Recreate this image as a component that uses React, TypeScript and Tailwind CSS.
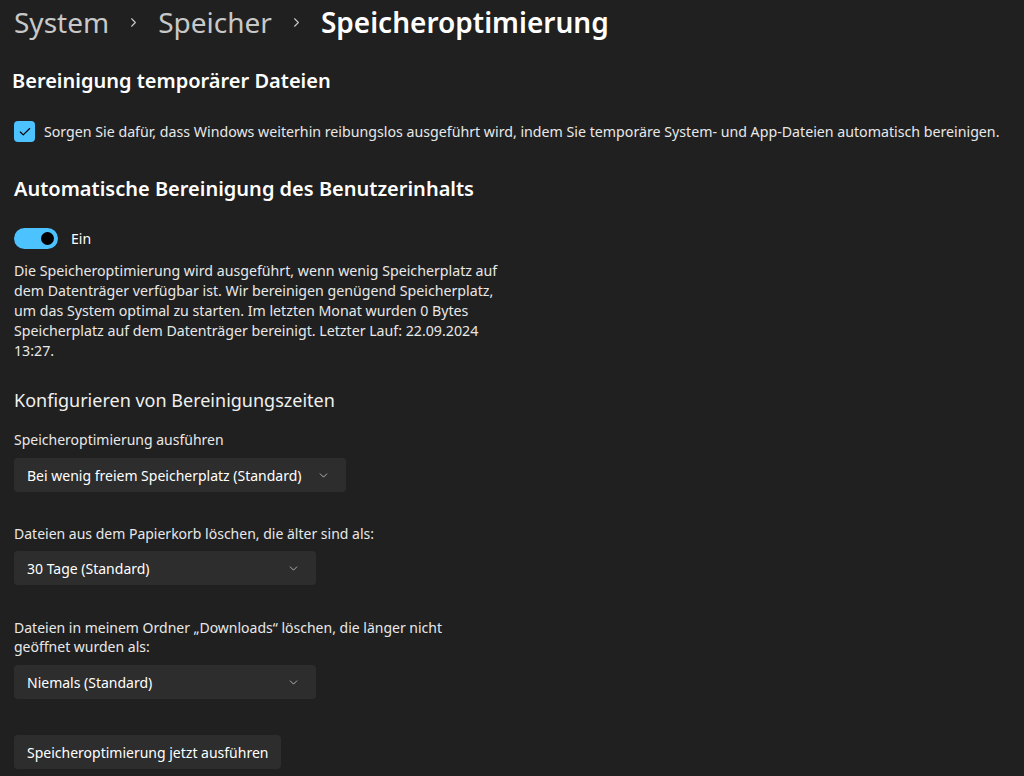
import { ChevronDown, ChevronRight, Check } from "lucide-react";

const font = { fontFamily: '"Segoe UI", "Noto Sans", sans-serif' };

const Select = ({ value, width }: { value: string; width: string }) => (
  <div
    className={`flex h-[34px] items-center justify-between rounded-[4px] bg-[#2d2d2d] pl-[13px] pr-[16px] text-[14px] text-[#ffffff] ${width}`}
  >
    <span>{value}</span>
    <ChevronDown size={13} strokeWidth={1.5} className="text-[#cfcfcf]" />
  </div>
);

export default function App() {
  return (
    <div
      className="h-[776px] w-[1024px] overflow-hidden bg-[#202020] text-[#ffffff]"
      style={font}
    >
      <div className="flex h-[44px] items-center pl-[14px] text-[28px] leading-none">
        <span className="text-[#c8c8c8]">System</span>
        <ChevronRight size={15} strokeWidth={1.75} className="mx-[17px] text-[#c8c8c8]" />
        <span className="text-[#c8c8c8]">Speicher</span>
        <ChevronRight size={15} strokeWidth={1.75} className="mx-[17px] text-[#c8c8c8]" />
        <span className="font-semibold">Speicheroptimierung</span>
      </div>

      <h2 className="mt-[24px] pl-[12px] text-[20px] font-semibold leading-[26px]">
        Bereinigung temporärer Dateien
      </h2>

      <label className="mt-[27px] flex items-center gap-[9px] pl-[14px] text-[14.2px] text-[#e8e8e8]">
        <span className="flex h-[21px] w-[21px] items-center justify-center rounded-[4px] bg-[#4cc2ff]">
          <Check size={14} strokeWidth={2} className="text-[#000000]" />
        </span>
        Sorgen Sie dafür, dass Windows weiterhin reibungslos ausgeführt wird, indem Sie temporäre System- und App-Dateien automatisch bereinigen.
      </label>

      <h2 className="mt-[34px] pl-[14px] text-[20px] font-semibold leading-[26px]">
        Automatische Bereinigung des Benutzerinhalts
      </h2>

      <div className="mt-[26px] flex items-center gap-[13px] pl-[14px] text-[14px]">
        <span className="flex h-[21px] w-[44px] items-center justify-end rounded-full bg-[#4cc2ff] pr-[4px]">
          <span className="h-[13px] w-[13px] rounded-full bg-[#000000]" />
        </span>
        Ein
      </div>

      <p className="mt-[12px] w-[514px] pl-[14px] text-[14.2px] leading-[20px] text-[#e8e8e8]">
        Die Speicheroptimierung wird ausgeführt, wenn wenig Speicherplatz auf dem Datenträger verfügbar ist. Wir bereinigen genügend Speicherplatz, um das System optimal zu starten. Im letzten Monat wurden 0 Bytes Speicherplatz auf dem Datenträger bereinigt. Letzter Lauf: 22.09.2024 13:27.
      </p>

      <h3 className="mt-[26px] pl-[14px] text-[18px] leading-[26px] text-[#f0f0f0]">
        Konfigurieren von Bereinigungszeiten
      </h3>

      <div className="mt-[17px] flex flex-col gap-[8px] pl-[14px] text-[14px]">
        <span className="leading-[20px] text-[#e8e8e8]">Speicheroptimierung ausführen</span>
        <Select value="Bei wenig freiem Speicherplatz (Standard)" width="w-[332px]" />
      </div>

      <div className="mt-[32px] flex flex-col gap-[7px] pl-[14px] text-[14px]">
        <span className="leading-[20px] text-[#e8e8e8]">
          Dateien aus dem Papierkorb löschen, die älter sind als:
        </span>
        <Select value="30 Tage (Standard)" width="w-[302px]" />
      </div>

      <div className="mt-[33px] flex flex-col gap-[9px] pl-[14px] text-[14px]">
        <span className="w-[470px] leading-[19px] text-[#e8e8e8]">
          Dateien in meinem Ordner „Downloads“ löschen, die länger nicht geöffnet wurden als:
        </span>
        <Select value="Niemals (Standard)" width="w-[302px]" />
      </div>

      <div className="mt-[36px] pl-[14px]">
        <button className="h-[34px] rounded-[4px] bg-[#2d2d2d] px-[13px] text-[14px] text-[#ffffff]">
          Speicheroptimierung jetzt ausführen
        </button>
      </div>
    </div>
  );
}
